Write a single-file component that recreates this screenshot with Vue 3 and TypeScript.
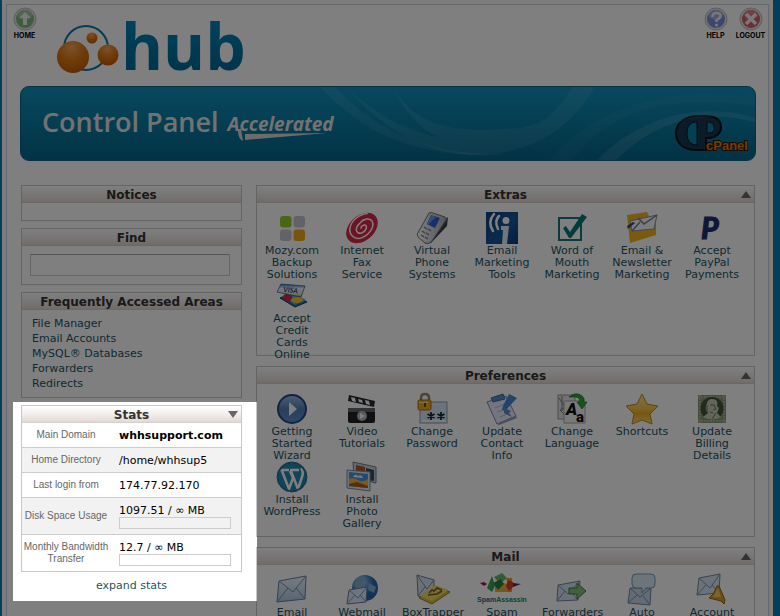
<script setup lang="ts">
import { ref } from 'vue'

interface Shortcut {
  label: string
  icon: string
}

interface Group {
  title: string
  items: Shortcut[]
}

interface Stat {
  label: string
  value: string
  strong?: boolean
  meter?: boolean
}

const query = ref('')

const favourites: string[] = ['File Manager', 'Email Accounts', 'MySQL® Databases', 'Forwarders', 'Redirects']

const stats: Stat[] = [
  { label: 'Main Domain', value: 'whhsupport.com', strong: true },
  { label: 'Home Directory', value: '/home/whhsup5' },
  { label: 'Last login from', value: '174.77.92.170' },
  { label: 'Disk Space Usage', value: '1097.51 / ∞ MB', meter: true },
  { label: 'Monthly Bandwidth Transfer', value: '12.7 / ∞ MB', meter: true },
]

const groups: Group[] = [
  {
    title: 'Extras',
    items: [
      { label: 'Mozy.com Backup Solutions', icon: 'mozy' },
      { label: 'Internet Fax Service', icon: 'fax' },
      { label: 'Virtual Phone Systems', icon: 'phone' },
      { label: 'Email Marketing Tools', icon: 'icontact' },
      { label: 'Word of Mouth Marketing', icon: 'check' },
      { label: 'Email & Newsletter Marketing', icon: 'newsletter' },
      { label: 'Accept PayPal Payments', icon: 'paypal' },
      { label: 'Accept Credit Cards Online', icon: 'cards' },
    ],
  },
  {
    title: 'Preferences',
    items: [
      { label: 'Getting Started Wizard', icon: 'play' },
      { label: 'Video Tutorials', icon: 'video' },
      { label: 'Change Password', icon: 'password' },
      { label: 'Update Contact Info', icon: 'contact' },
      { label: 'Change Language', icon: 'language' },
      { label: 'Shortcuts', icon: 'star' },
      { label: 'Update Billing Details', icon: 'billing' },
      { label: 'Install WordPress', icon: 'wordpress' },
      { label: 'Install Photo Gallery', icon: 'gallery' },
    ],
  },
  {
    title: 'Mail',
    items: [
      { label: 'Email', icon: 'email' },
      { label: 'Webmail', icon: 'webmail' },
      { label: 'BoxTrapper', icon: 'trapper' },
      { label: 'Spam', icon: 'spam' },
      { label: 'Forwarders', icon: 'forward' },
      { label: 'Auto', icon: 'auto' },
      { label: 'Account', icon: 'filter' },
    ],
  },
]

const icons: Record<string, string> = {
  mozy: `<rect x="4" y="4" width="11.500" height="11.500" rx="3" fill="#8fcf2c"/><rect x="17.500" y="4" width="11.500" height="11.500" rx="3" fill="#c6c4cc"/><rect x="4" y="17.500" width="11.500" height="11.500" rx="3" fill="#c6c4cc"/><rect x="17.500" y="17.500" width="11.500" height="11.500" rx="3" fill="#eeac12"/>`,
  fax: `<g transform="rotate(-42 16 16)"><ellipse cx="16" cy="16" rx="18" ry="12.500" fill="#d92748"/><path d="M30 9c-6-5-17-6-23-1-5 4-5 12 2 15 7 3 17 1 19-5 1-5-5-8-11-7-5 0-8 3-7 6 1 3 6 4 9 2 2-1 2-3 0-4-2-1-4 0-4 1" fill="none" stroke="#fff" stroke-width="1.500"/></g>`,
  phone: `<defs><linearGradient id="ph" x1="0" y1="0" x2="1" y2="0"><stop offset="0" stop-color="#fff"/><stop offset="1" stop-color="#a9acb3"/></linearGradient></defs><path d="M21 13l11-8-1 9-16 17-6 1z" fill="#3d424c"/><path d="M13 1q2-1 4 0l12 4q2 1 1 3L16 29q-3 4-7 2l-7-6q-2-3 1-6z" fill="url(#ph)" stroke="#6f747d" stroke-width="1"/><path d="M15 3l9 3-5 10-8-4z" fill="#285fd2"/><path d="M15 3l5 2-8 8-1-1z" fill="#6598ec"/><path d="M8 15l3 2M12 17l3 2M6 19l3 2M10 21l3 2M5 23l3 2M9 25l3 2" stroke="#777c86" stroke-width="1.500"/>`,
  icontact: `<defs><linearGradient id="ic" x1="0" y1="0" x2="1" y2="1"><stop offset="0" stop-color="#0e3f80"/><stop offset=".6" stop-color="#16589c"/><stop offset="1" stop-color="#0c3972"/></linearGradient></defs><rect width="32" height="32" fill="url(#ic)"/><circle cx="20" cy="8.500" r="3.500" fill="#fff"/><path d="M15 14h8l-2 18h-5l1-14h-2z" fill="#e3ecf5"/><path d="M13 4q-5 5-1 13M8 2q-7 8-1 17" fill="none" stroke="#fff" stroke-width="2.500" stroke-linecap="round"/>`,
  check: `<rect x="3" y="6" width="22" height="22" fill="none" stroke="#14797c" stroke-width="2"/><path d="M7 16l3-2 4 6L26 2l5 3-16 21h-2z" fill="#0b7679"/>`,
  newsletter: `<path d="M1 3l20-3 2 4-2 3 9 2v14L4 31z" fill="#f3b51c"/><path d="M4 9l27-6-3 14-22 2z" fill="#f5f8fd" stroke="#8390a9"/><path d="M12 6l6 6L31 3M6 19l8-9" fill="none" stroke="#6f7d98" stroke-width="1.500"/><path d="M1 14l6-4 2 1-7 6z" fill="#324c70"/>`,
  paypal: `<text x="5" y="27" font-family="Lato, sans-serif" font-size="30" font-weight="900" font-style="italic" fill="#1e2e70" stroke="#1e2e70">P</text>`,
  cards: `<defs><linearGradient id="vs" x1="0" y1="0" x2="0" y2="1"><stop offset="0" stop-color="#3570bd"/><stop offset=".35" stop-color="#e9f4fa"/><stop offset=".75" stop-color="#e9e7c7"/><stop offset="1" stop-color="#d79527"/></linearGradient></defs><path d="M4 18l10-5 17 9-12 5z" fill="#2d67a5" stroke="#10446d"/><path d="M6 16l10-4 14 8-11 5z" fill="#62a2d0"/><circle cx="12" cy="17" r="4" fill="#da2545"/><ellipse cx="21" cy="20" rx="6" ry="3" fill="#efcc26"/><path d="M5 4l24 2-4 11-24-5z" fill="url(#vs)" stroke="#286a91" stroke-width=".8"/><text x="7" y="12" font-family="Lato, sans-serif" font-size="7" font-weight="900" font-style="italic" fill="#1f55a9" transform="rotate(5 7 12)">VISA</text>`,
  play: `<defs><linearGradient id="pl" x1="0" y1="0" x2="0" y2="1"><stop offset="0" stop-color="#9dbdea"/><stop offset=".5" stop-color="#557fba"/><stop offset="1" stop-color="#5b91d4"/></linearGradient></defs><circle cx="16" cy="16" r="14" fill="url(#pl)" stroke="#26477b" stroke-width="2"/><path d="M13 9v14l8-7z" fill="#fff"/>`,
  video: `<path d="M3 2l26 6-1 6-26-6z" fill="#27282b"/><path d="M5 4l4 1 1 4-4-1zM12 6l4 1 1 3-4-1zM19 7l4 1 1 4-4-1z" fill="#fff"/><path d="M2 15h27v13q0 2-2 2H4q-2 0-2-2z" fill="#202125"/><path d="M2 15h27v4H2z" fill="#63666c"/><circle cx="16" cy="23" r="5" fill="#b3b6bb"/><path d="M14 20v6l5-3z" fill="#fff"/>`,
  password: `<rect x="4" y="9" width="27" height="21" fill="#d9e7f4" stroke="#88a0b9"/><path d="M5 27h25v2H5z" fill="#f4faff"/><path d="M5 8V5q0-4 4-4t4 4v3" fill="none" stroke="#95866c" stroke-width="2.500"/><rect x="2" y="7" width="13" height="10" rx="1.500" fill="#f2ac19" stroke="#a66a10"/><path d="M3 9h9v1H3z" fill="#ffe482"/><path d="M9 10v4" stroke="#654614" stroke-width="2"/><path d="M15 19v8M11.500 21l7 4M18.500 21l-7 4M25 19v8M21.500 21l7 4M28.500 21l-7 4" stroke="#172739" stroke-width="1.800"/>`,
  contact: `<path d="M1 9l19-6 10 20-19 8z" fill="#e9ebfa" stroke="#7f86b5"/><path d="M11 31l19-8 1 2-18 7z" fill="#9797c4"/><path d="M5 5l12-4 2 5-12 3z" fill="#568fcb" stroke="#346ca5"/><path d="M9 15l10-4M11 19l8-3M14 24l7-3" stroke="#b2bade"/><path d="M23 1l8 4-12 13-3-1 1-4z" fill="#4588d3"/><path d="M18 14l3 2 4 2-2 2 3 4-8-4z" fill="#5b8dc9"/>`,
  language: `<rect x="2" y="2" width="17" height="24" fill="#e3e5e9" stroke="#969aa1"/><path d="M3 5l6 9-5 3 5 5M6 3v15" fill="none" stroke="#76808c"/><path d="M8 8h17l4 4v18H8z" fill="#f5f5f5" stroke="#a6a6a6"/><text x="10" y="22" font-family="Roboto, sans-serif" font-size="17" font-weight="900" font-style="italic" fill="#111">A</text><text x="20" y="29" font-family="Roboto, sans-serif" font-size="15" font-weight="900" fill="#111">a</text><path d="M13 4q7-6 13-1 3 2 2 6h3l-5 7-5-7h3q0-5-5-5z" fill="#35a238" stroke="#16761c" stroke-width=".7"/>`,
  star: `<defs><linearGradient id="st" x1="0" y1="0" x2="0" y2="1"><stop offset="0" stop-color="#ffe794"/><stop offset=".5" stop-color="#f5c548"/><stop offset=".65" stop-color="#edae20"/><stop offset="1" stop-color="#ffd86b"/></linearGradient></defs><path d="M16 1l5 10 11 2-8 8 2 10-10-4-10 4 2-10-8-8 11-2z" fill="url(#st)" stroke="#bb892b"/>`,
  billing: `<rect x="2" y="2" width="28" height="28" fill="#8c9878"/><path d="M2 4h28M2 28h28M4 2v28M28 2v28" stroke="#aab395" stroke-width="2" stroke-dasharray="2 1"/><ellipse cx="16" cy="15.500" rx="11.500" ry="11.500" fill="#44523b"/><path d="M16 6q7 0 5 7l2 2-2 5 4 4q-9 6-18 0l5-4q-4-4-1-10 1-4 5-4" fill="#c4cbb2"/><path d="M14 12h5M18 12l2 4-3 1M14 19l3 1M11 12v7M20 20l-4 6" fill="none" stroke="#6f785b"/>`,
  wordpress: `<circle cx="16" cy="16" r="15" fill="#e0eff5" stroke="#21789c"/><circle cx="16" cy="16" r="13.500" fill="#2189ac"/><path d="M4 9h9M14 9h9M6 10l7 18 4-11-3-7M15 10l7 18 4-12q2-5-1-9" fill="none" stroke="#fff" stroke-width="2.500"/><circle cx="16" cy="16" r="14" fill="none" stroke="#1b7298" stroke-width="1.500"/>`,
  gallery: `<path d="M7 1l23 5v16L8 17z" fill="#c7d2dc" stroke="#6d808f"/><path d="M10 4l9 2v10l-9-2z" fill="#b65427"/><path d="M20 7l8 2v11l-8-1z" fill="#334c66"/><path d="M1 9l23 2v19L1 27z" fill="#e1e9f0" stroke="#748fa5"/><path d="M3 11l19 2v14L3 25z" fill="#4c94de"/><path d="M3 18q5-2 9 1t10-1v9L3 25z" fill="#efb936"/><path d="M3 23l8-2 11 4v2L3 25z" fill="#af5721"/><path d="M7 16q2-4 5-1 4-2 5 2z" fill="#eef5fc"/>`,
  email: `<defs><linearGradient id="em" x1="0" y1="0" x2="0" y2="1"><stop offset="0" stop-color="#f5faff"/><stop offset="1" stop-color="#a9c8e7"/></linearGradient></defs><path d="M3 7l27-5-1 23-28 3z" fill="url(#em)" stroke="#657f9f"/><path d="M3 7l14 11L30 2M1 28l11-14M29 25l-9-11" fill="none" stroke="#7790af"/>`,
  webmail: `<defs><radialGradient id="wg" cx=".35" cy=".3"><stop offset="0" stop-color="#a6d5ff"/><stop offset="1" stop-color="#2366ad"/></radialGradient></defs><circle cx="19" cy="14" r="13" fill="url(#wg)"/><path d="M11 4q7-4 10 1l-4 3 2 4-5 3-6-3zM23 9l7 4-2 6-6-3z" fill="#7fb3c9"/><path d="M3 16l18-3-1 15-19 2z" fill="#ddeafa" stroke="#647f9f"/><path d="M3 16l9 8 9-11M1 30l8-9M20 28l-6-7" fill="none" stroke="#8198b5"/>`,
  trapper: `<path d="M1 1l17 5v21L2 22z" fill="#d8e3f0" stroke="#6c8198"/><path d="M1 1l10 14 7-9M2 22l7-9" fill="none" stroke="#75869d"/><path d="M3 24l16-11 15 5-18 12z" fill="#d8be32" stroke="#96822d"/><path d="M4 22l15-11 14 5-17 11z" fill="#efdb64"/><path d="M13 19l3-3 2 1 3-3 5 2M12 21l9-1 5-3" fill="none" stroke="#725d22" stroke-width="1.500"/>`,
  spam: `<path d="M-6 9l4-1 3 2-3 2z" fill="#a11765"/><path d="M1 14l5-12 3 10-3 6z" fill="#38a343"/><path d="M8 3l8-4 5 5-7 6z" fill="#69b966"/><path d="M9 12l6-3 8 1-3 8H9z" fill="#efb130"/><path d="M20 4h6v14h-6l2-7z" fill="#ee9a30"/><path d="M22 6l5 2 1 4-5 5-3-5z" fill="#dc3e28"/><path d="M7 9l8-4 3 5-6 6z" fill="#238245"/><path d="M27 9l8 1-8 3z" fill="#592475"/><text x="16" y="28" text-anchor="middle" font-family="Liberation Sans, sans-serif" font-size="7" font-weight="bold"><tspan fill="#176c9a">Spam</tspan><tspan fill="#31833b">Assassin</tspan></text>`,
  forward: `<path d="M2 11l22-4-2 19-21 1z" fill="#d3e1f0" stroke="#7189a7"/><path d="M2 11l10 9L24 7M1 27l8-10M22 26l-7-8" fill="none" stroke="#7790ac"/><path d="M13 14h8v-5l9 8-9 8v-5h-8z" fill="#83c276" stroke="#3b7d44"/>`,
  auto: `<path d="M4 14l21 0-1 17-22-2z" fill="#c7d9eb" stroke="#7087a6"/><path d="M4 14l10 9 11-9M2 29l9-8M24 31l-7-9" fill="none" stroke="#7a90ad"/><path d="M10 0h15q4 0 4 4v6q0 4-4 4h-5l-4 5v-5h-6q-4 0-4-4V4q0-4 4-4z" fill="#dbeaf5" stroke="#7599b6"/>`,
  filter: `<path d="M3 4l21-4-1 19-22 2z" fill="#d8e5f4" stroke="#7187a5"/><path d="M3 4l11 10L24 0M1 21l9-10M23 19l-7-8" fill="none" stroke="#8094b0"/><path d="M21 12l2 0 6 14-1 4-3-3-12-3q5-3 8-12z" fill="#d99b29" stroke="#93671b"/><path d="M22 14l3 9-8 0z" fill="#f4cc5d"/>`,
}
</script>

<template>
  <div class="page">
    <main class="sheet">
      <header class="top">
        <a class="tool" href="#home">
          <svg class="orb" viewBox="0 0 24 24" aria-hidden="true">
            <circle cx="12" cy="12" r="11" fill="#e4e4e4" stroke="#bdbdbd" />
            <circle cx="12" cy="12" r="9" fill="#7fb87f" />
            <ellipse cx="12" cy="8" rx="7" ry="5" fill="#a3c6a3" />
            <path d="M12 5l6 6h-4v7h-4v-7H6z" fill="#f2f2f2" />
          </svg>
          <span>HOME</span>
        </a>
        <svg class="logo" viewBox="0 0 200 70" role="img" aria-label="hub">
          <defs>
            <radialGradient id="ball" cx=".45" cy=".2" r=".9">
              <stop offset="0" stop-color="#f5a55c" />
              <stop offset=".45" stop-color="#e07a12" />
              <stop offset="1" stop-color="#bd5500" />
            </radialGradient>
            <linearGradient id="word" x1="0" y1="0" x2="0" y2="1">
              <stop offset="0" stop-color="#008ec4" />
              <stop offset="1" stop-color="#00608c" />
            </linearGradient>
          </defs>
          <circle cx="36" cy="38" r="22" fill="none" stroke="#087da8" stroke-width="2" />
          <circle cx="23" cy="47" r="16" fill="url(#ball)" />
          <circle cx="58" cy="45" r="10.500" fill="url(#ball)" />
          <circle cx="42" cy="28" r="5.500" fill="url(#ball)" />
          <text x="71" y="60" class="word">hub</text>
        </svg>
        <nav class="tools">
          <a class="tool" href="#help">
            <svg class="orb" viewBox="0 0 24 24" aria-hidden="true">
              <circle cx="12" cy="12" r="11" fill="#e4e4e4" stroke="#bdbdbd" />
              <circle cx="12" cy="12" r="9" fill="#7a8fd6" />
              <ellipse cx="12" cy="8" rx="7" ry="5" fill="#a0addd" />
              <path d="M8.500 10q0-4 4-4t4 3q0 2-4 4v2" fill="none" stroke="#f2f2f2" stroke-width="2.500" />
              <circle cx="12.500" cy="18" r="1.500" fill="#f2f2f2" />
            </svg>
            <span>HELP</span>
          </a>
          <a class="tool" href="#logout">
            <svg class="orb" viewBox="0 0 24 24" aria-hidden="true">
              <circle cx="12" cy="12" r="11" fill="#e4e4e4" stroke="#bdbdbd" />
              <circle cx="12" cy="12" r="9" fill="#d95d68" />
              <ellipse cx="12" cy="8" rx="7" ry="5" fill="#dc828b" />
              <path d="M7 7l10 10M17 7L7 17" stroke="#f2f2f2" stroke-width="3.500" />
            </svg>
            <span>LOGOUT</span>
          </a>
        </nav>
      </header>

      <section class="banner">
        <svg class="swoosh" viewBox="0 0 736 75" preserveAspectRatio="none" aria-hidden="true">
          <path d="M300 0C345 50 400 75 490 69C430 70 370 60 315 0z" fill="#fff" fill-opacity=".07" />
          <path d="M327 0C370 45 430 62 478 54C440 62 400 60 373 0C395 40 430 48 500 42C530 38 540 20 553 0H575C550 45 510 70 450 70C390 65 350 30 327 0z" fill="#fff" fill-opacity=".08" />
          <path d="M578 75C620 30 680 15 736 31V36C685 22 635 35 597 75z" fill="#fff" fill-opacity=".1" />
          <path d="M530 75C570 25 650-5 736 12V20C670 8 610 20 575 50L552 75z" fill="#fff" fill-opacity=".04" />
        </svg>
        <h1 class="title">Control Panel</h1>
        <div class="accel">
          <span>Accelerated</span>
          <svg class="streak" viewBox="0 0 96 12" aria-hidden="true">
            <path d="M2 0h3l2 12C3 10 2 6 2 0zM9 5l82-1L9 11z" fill="#d8d8d8" />
          </svg>
        </div>
        <svg class="cpanel" viewBox="0 0 76 40" role="img" aria-label="cPanel">
          <path
            d="M26 2h6c11 0 16 4 16 11s-6 11-13 11h-2v12h-9C10 36 3 29 3 19S12 2 26 2z"
            fill="#16384f"
            stroke="#06131c"
            stroke-width="2"
          />
          <path d="M24 8v23C17 31 14 26 14 19s3-11 10-11zM34 8c5 0 7 2 7 6s-2 5-7 5z" fill="#0b7fa9" stroke="#06131c" />
          <text x="33" y="36" class="cpword">cPanel</text>
        </svg>
      </section>

      <div class="columns">
        <aside class="side">
          <section class="panel">
            <h2>Notices</h2>
            <div class="notices"></div>
          </section>
          <section class="panel">
            <h2><label for="find">Find</label></h2>
            <div class="find"><input id="find" v-model="query" type="text" /></div>
          </section>
          <section class="panel">
            <h2>Frequently Accessed Areas</h2>
            <ul class="links">
              <li v-for="name in favourites" :key="name">
                <a href="#area">{{ name }}</a>
              </li>
            </ul>
          </section>
          <div class="focus">
            <section class="panel">
              <h2>
                Stats
                <button class="arrow down" type="button" aria-label="Collapse Stats"></button>
              </h2>
              <table class="stats">
                <tbody>
                  <tr v-for="row in stats" :key="row.label">
                    <th scope="row">{{ row.label }}</th>
                    <td>
                      <strong v-if="row.strong">{{ row.value }}</strong>
                      <template v-else>{{ row.value }}</template>
                      <div v-if="row.meter" class="meter"></div>
                    </td>
                  </tr>
                </tbody>
              </table>
            </section>
            <a class="expand" href="#stats">expand stats</a>
          </div>
        </aside>

        <div class="groups">
          <section v-for="group in groups" :key="group.title" class="panel">
            <h2>
              {{ group.title }}
              <button class="arrow up" type="button" :aria-label="'Collapse ' + group.title"></button>
            </h2>
            <div class="grid">
              <a v-for="item in group.items" :key="item.label" class="item" href="#open">
                <svg class="icon" viewBox="0 0 32 32" aria-hidden="true" v-html="icons[item.icon]"></svg>
                <span>{{ item.label }}</span>
              </a>
            </div>
          </section>
        </div>
      </div>
    </main>
  </div>
</template>

<style>
body {
  margin: 0;
}
</style>

<style scoped>
* {
  box-sizing: border-box;
}

.page {
  height: 100vh;
  overflow: hidden;
  padding: 0 7px 0 2px;
  background: #0a7fae;
  font-family: Verdana, 'DejaVu Sans', sans-serif;
  font-size: 11px;
  line-height: 12px;
  color: #000;
}

.sheet {
  min-height: 100%;
  border: 4px solid #fafafa;
  border-bottom: 0;
  background: #fff;
  box-shadow: inset 0 0 0 1px #c8d0d8;
  padding: 1px 1px 0;
}

a {
  color: #1b5564;
  text-decoration: none;
}

.top {
  display: flex;
  height: 81px;
}

.tool {
  display: flex;
  flex-direction: column;
  align-items: center;
  gap: 1px;
  width: 35px;
  padding-top: 2px;
  color: #000;
  font: 700 7px/8px Inter, sans-serif;
}

.orb {
  width: 24px;
  height: 24px;
}

.tools {
  display: flex;
  margin-left: auto;
}

.logo {
  width: 200px;
  height: 70px;
  margin: 5px 0 0 8px;
  overflow: visible;
}

.word {
  font: 700 64px 'Open Sans', sans-serif;
  fill: url(#word);
}

.banner {
  position: relative;
  display: flex;
  align-items: center;
  height: 75px;
  margin: 0 12px 24px 13px;
  padding: 0 6px 0 21px;
  overflow: hidden;
  border: 1px solid #0a6487;
  border-radius: 9px;
  background: linear-gradient(#1092be, #05658a);
}

.swoosh {
  position: absolute;
  inset: 0;
  width: 100%;
  height: 100%;
}

.title {
  margin: 0 0 4px;
  color: #e4e4e4;
  font: 600 27px/40px 'Open Sans', sans-serif;
}

.accel {
  margin: 8px 0 0 9px;
  color: #e4e4e4;
  font: italic 700 19px/20px 'Open Sans', sans-serif;
}

.accel span,
.streak {
  display: block;
}

.streak {
  width: 96px;
  height: 12px;
  margin: -5px 0 0 8px;
}

.cpanel {
  width: 76px;
  height: 40px;
  margin: 20px 0 0 auto;
  overflow: visible;
}

.cpword {
  font: 700 13px 'Liberation Sans', sans-serif;
  fill: #e07a18;
  stroke: #2a1600;
  stroke-width: 2px;
  paint-order: stroke;
}

.columns {
  display: grid;
  grid-template-columns: 221px 1fr;
  gap: 14px;
  padding: 0 13px 0 14px;
}

.side {
  display: flex;
  flex-direction: column;
  gap: 7px;
}

.groups {
  display: flex;
  flex-direction: column;
  gap: 10px;
}

.panel {
  border: 1px solid #c8c8c8;
}

h2 {
  display: flex;
  position: relative;
  align-items: center;
  justify-content: center;
  height: 17px;
  margin: 0;
  padding-top: 1px;
  border-bottom: 1px solid #d8d0cc;
  background: linear-gradient(#fff, #f2eeec 50%, #e2d8d3);
  color: #333;
  font-size: 12px;
  line-height: 16px;
}

.arrow {
  position: absolute;
  right: 3px;
  width: 10px;
  height: 7px;
  border: 0;
  padding: 0;
  background: #666;
}

.up {
  clip-path: polygon(50% 0, 100% 100%, 0 100%);
}

.down {
  clip-path: polygon(0 0, 100% 0, 50% 100%);
}

.notices {
  height: 17px;
}

.find {
  padding: 8px 11px 8px 8px;
}

.find input {
  display: block;
  width: 100%;
  height: 22px;
  border: 1px solid #ccc;
  border-top-color: #aaa;
  padding: 2px 4px;
  background: #fff;
  font: inherit;
}

.links {
  margin: 0;
  padding: 6px 10px;
  list-style: none;
  line-height: 15px;
}

.focus {
  position: relative;
  height: 196px;
}

/* Dims everything except the area around the stats panel. */
.focus::after {
  content: '';
  position: absolute;
  z-index: 10;
  inset: -3px -15px 0 -8px;
  box-shadow: 0 0 0 2000px rgba(0, 0, 0, 0.5);
  pointer-events: none;
}

.stats {
  width: 100%;
  table-layout: fixed;
  border-collapse: separate;
  border-spacing: 0;
}

.stats th {
  width: 88px;
  padding: 0;
  color: #666;
  font: 10px/12px 'Liberation Sans', Arial, sans-serif;
  text-align: center;
}

.stats td {
  height: 25px;
  padding: 1px 10px 0 9px;
}

.stats th,
.stats td {
  border-bottom: 1px solid #ccc;
}

.stats tr:last-child > * {
  border-bottom: 0;
}

.stats tr:nth-child(even) {
  background: #f2f2f2;
}

.stats td:has(.meter) {
  padding-top: 7px;
  padding-bottom: 5px;
}

.meter {
  height: 12px;
  border: 1px solid #ccc;
}

.expand {
  display: block;
  margin-top: 7px;
  line-height: 13px;
  text-align: center;
}

.grid {
  display: grid;
  grid-template-columns: repeat(auto-fill, 70px);
  grid-auto-rows: 68px;
  height: 152px;
  padding-top: 9px;
}

.item {
  text-align: center;
}

.icon {
  display: block;
  width: 32px;
  height: 32px;
  margin: 0 auto;
  overflow: visible;
}

.item span {
  display: block;
  padding: 1px 5px 0;
}
</style>
